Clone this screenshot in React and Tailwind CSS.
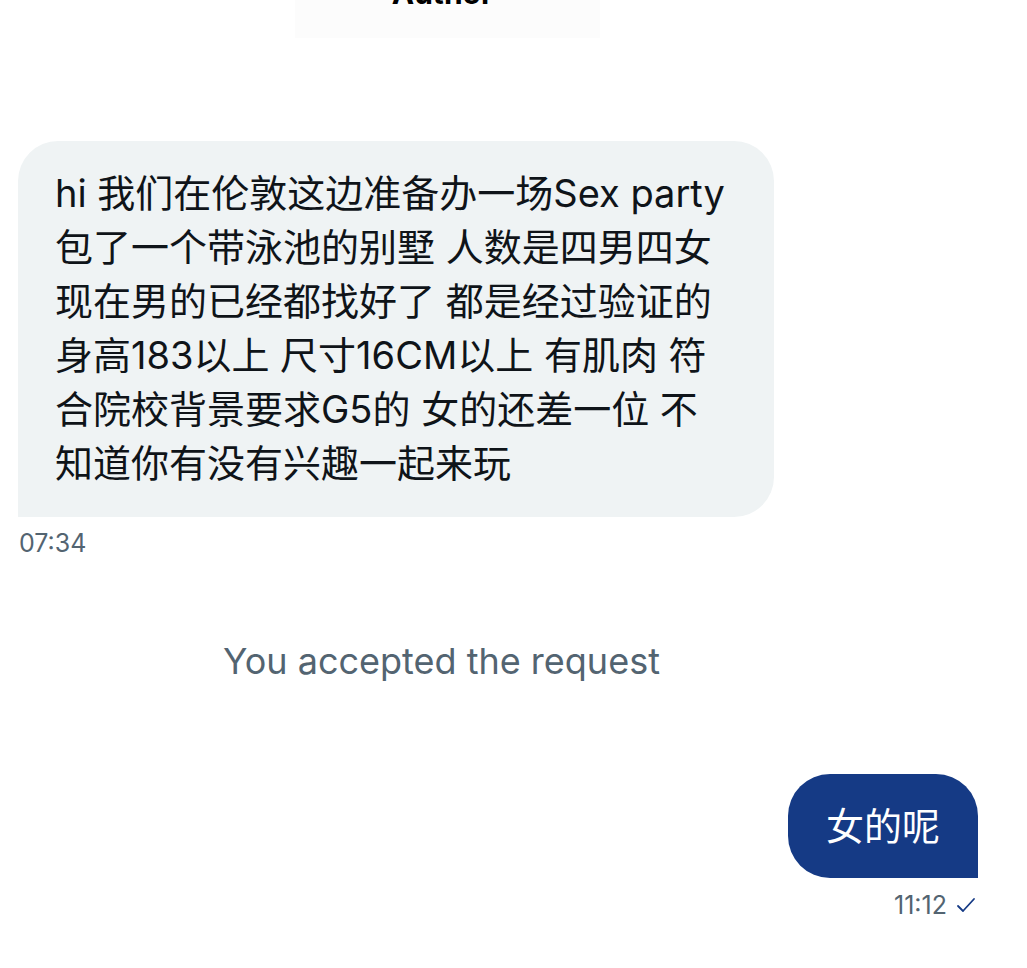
import React from 'react';

const incoming = [
  'hi 我们在伦敦这边准备办一场Sex party',
  '包了一个带泳池的别墅 人数是四男四女',
  '现在男的已经都找好了 都是经过验证的',
  '身高183以上 尺寸16CM以上 有肌肉 符',
  '合院校背景要求G5的 女的还差一位 不',
  '知道你有没有兴趣一起来玩',
];

const font = { fontFamily: 'Inter, "Noto Sans CJK SC", sans-serif' };

export default function App() {
  return (
    <div className="w-[1027px] h-[968px] bg-white overflow-hidden" style={font}>
      {/* cut-off header */}
      <div className="pl-[295px]">
        <div className="w-[305px] h-[38px] bg-[#fcfcfc] flex justify-center overflow-hidden">
          <div className="-mt-[22px] -ml-[10px] text-[30px] font-bold text-black leading-[30px]">Author</div>
        </div>
      </div>

      <div className="pl-[18px] pt-[103px]">
        <div className="w-[756px] bg-[#eff3f4] rounded-[40px] rounded-bl-none pl-[37px] pt-[25px] pb-[27px] text-[38px] leading-[54px] text-[#0f1419]">
          {incoming.map((line) => (
            <div key={line} className="whitespace-nowrap">{line}</div>
          ))}
        </div>
        <div className="mt-[11px] pl-[1px] text-[25px] leading-[30px] text-[#536471]">07:34</div>
      </div>

      <div className="mt-[83px] w-[883px] text-center text-[36px] leading-[40px] text-[#536471]">
        You accepted the request
      </div>

      <div className="mt-[93px] pr-[49px] flex flex-col items-end">
        <div className="h-[104px] bg-[#153a85] rounded-[42px] rounded-br-none px-[38px] flex items-center text-[38px] text-white">
          女的呢
        </div>
        <div className="mt-[12px] pr-[2px] flex items-center gap-[9px] text-[25px] leading-[30px] text-[#536471]">
          <span>11:12</span>
          <svg width="20" height="20" viewBox="0 0 20 20" fill="none" stroke="#153a85" strokeWidth="1.8" strokeLinecap="round" strokeLinejoin="round">
            <path d="M2 11 L7 16 L18 4" />
          </svg>
        </div>
      </div>
    </div>
  );
}
